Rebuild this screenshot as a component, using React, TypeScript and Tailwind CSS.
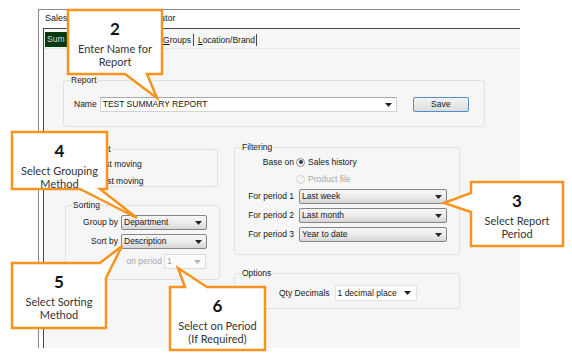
import React from "react";

function Arrow({ color = "#222" }: { color?: string }) {
  return (
    <svg width="7" height="4" viewBox="0 0 7 4" className="shrink-0">
      <path d="M0 0 H7 L3.5 4 Z" fill={color} />
    </svg>
  );
}

function ComboGrad({ text, w }: { text: string; w: string }) {
  return (
    <div
      className={`${w} h-[15px] border border-[#858585] rounded-[2px] bg-gradient-to-b from-[#f7f7f7] via-[#ececec] to-[#d6d6d6] flex items-center justify-between pl-[2px] pr-[4px]`}
    >
      <span className="leading-none">{text}</span>
      <Arrow />
    </div>
  );
}

function GroupBox({
  label,
  className,
  children,
}: {
  label: string;
  className: string;
  children?: React.ReactNode;
}) {
  return (
    <div className={`relative border border-[#e0e0e0] rounded-[3px] ${className}`}>
      <span className="absolute -top-[6px] left-[6px] px-[1px] bg-[#f6f6f6] leading-[10px]">
        {label}
      </span>
      {children}
    </div>
  );
}

function Radio({ checked, disabled }: { checked?: boolean; disabled?: boolean }) {
  return (
    <div
      className={`w-[9px] h-[9px] rounded-full border flex items-center justify-center shrink-0 ${
        disabled
          ? "border-[#d4d4d4] bg-[#f4f4f4]"
          : "border-[#8e8e8e] bg-gradient-to-b from-[#e9e9e9] to-[#ffffff]"
      }`}
    >
      {checked && <div className="w-[4px] h-[4px] rounded-full bg-[#2d3c4a]" />}
    </div>
  );
}

function Callout({
  left,
  top,
  width,
  num,
  lines,
}: {
  left: string;
  top: string;
  width: string;
  num: string;
  lines: string[];
}) {
  return (
    <div
      className={`absolute ${left} ${top} ${width} flex flex-col items-center pt-[9px] font-['Lato',sans-serif] text-[#333]`}
    >
      <div className="text-[17px] leading-[20px] font-bold text-[#111] mb-[3px]">{num}</div>
      {lines.map((l) => (
        <div key={l} className="text-[11px] leading-[13px] whitespace-nowrap">
          {l}
        </div>
      ))}
    </div>
  );
}

export default function App() {
  return (
    <div className="relative w-[572px] h-[356px] bg-white overflow-hidden font-['Liberation_Sans',Arial,sans-serif] text-[8.5px] text-[#161616]">
      {/* window */}
      <div className="ml-[38px] mt-[9px] w-[482px] h-[339px] border-l border-t border-[#8a8a8a] flex flex-col">
        <div className="h-[18px] bg-white flex items-center pl-[6px] text-[9px]">
          Sales Analysis Report Generator
        </div>
        <div className="flex-1 flex">
          <div className="w-[4px] bg-white" />
          <div className="flex-1 border-l border-t border-[#474747] bg-[#f6f6f6] flex flex-col">
            {/* tabs */}
            <div className="h-[20px] border-b border-[#e6e6e6] flex items-end pb-[1px] pl-[1px]">
              <div className="w-[52px] h-[15px] bg-[#093809] text-[#d8d8d8] flex items-center pl-[2px]">
                Sum
              </div>
              <div className="w-[66px] h-[15px] flex items-center justify-end pr-[4px]">
                <span className="h-[12px] border-r border-[#444]" />
              </div>
              <div className="h-[15px] flex items-center">
                <span className="pr-[2px] border-r border-[#444] leading-[12px]">
                  <u>G</u>roups
                </span>
              </div>
              <div className="h-[15px] flex items-center pl-[4px]">
                <span className="pr-[1px] border-r border-[#444] leading-[12px]">
                  <u>L</u>ocation/Brand
                </span>
              </div>
            </div>

            {/* content */}
            <div className="flex flex-col pl-[19px]">
              <GroupBox label="Report" className="mt-[31px] w-[422px] h-[47px]">
                <div className="flex items-center pt-[16px] pl-[10px]">
                  <span>Name</span>
                  <div className="ml-[3px] w-[297px] h-[15px] bg-white border border-[#d2d2d2] border-t-[#a9a9a9] flex items-center justify-between pl-[2px] pr-[4px]">
                    <span>TEST SUMMARY REPORT</span>
                    <Arrow />
                  </div>
                  <div className="ml-[16px] w-[56px] h-[15px] border border-[#4f8fcf] rounded-[2px] bg-gradient-to-b from-[#f4f4f4] to-[#dcdcdc] flex items-center justify-center">
                    Save
                  </div>
                </div>
              </GroupBox>

              <div className="flex items-start gap-[14px] mt-[20px]">
                {/* left column */}
                <div className="flex flex-col w-[157px] pt-[2px]">
                  <GroupBox label="Movement" className="w-[155px] h-[38px]">
                    <div className="flex flex-col gap-[5px] pt-[8px] pl-[8px]">
                      <div className="flex items-center h-[12px] gap-[3px]">
                        <Radio />
                        <span>Fastest moving</span>
                      </div>
                      <div className="flex items-center h-[12px] gap-[3px]">
                        <Radio checked />
                        <span>Slowest moving</span>
                      </div>
                    </div>
                  </GroupBox>
                  <GroupBox label="Sorting" className="ml-[2px] mt-[18px] w-[155px] h-[75px]">
                    <div className="flex flex-col pt-[9px]">
                      <div className="flex items-center">
                        <span className="w-[52px] text-right">Group by</span>
                        <div className="ml-[3px]">
                          <ComboGrad text="Department" w="w-[86px]" />
                        </div>
                      </div>
                      <div className="flex items-center mt-[4px]">
                        <span className="w-[52px] text-right">Sort by</span>
                        <div className="ml-[3px]">
                          <ComboGrad text="Description" w="w-[86px]" />
                        </div>
                      </div>
                      <div className="flex items-center mt-[5px]">
                        <span className="w-[96px] text-right text-[#a8a8a8]">on period</span>
                        <div className="ml-[2px] w-[42px] h-[15px] bg-[#fbfbfb] border border-[#dcdcdc] flex items-center justify-between pl-[2px] pr-[4px] text-[#a0a0a0]">
                          <span>1</span>
                          <Arrow color="#b5b5b5" />
                        </div>
                      </div>
                    </div>
                  </GroupBox>
                </div>

                {/* right column */}
                <div className="flex flex-col w-[226px]">
                  <GroupBox label="Filtering" className="w-[226px] h-[108px]">
                    <div className="flex flex-col pt-[8px]">
                      <div className="flex items-center h-[12px]">
                        <span className="w-[59px] text-right">Base on</span>
                        <div className="ml-[2px]">
                          <Radio checked />
                        </div>
                        <span className="ml-[3px]">Sales history</span>
                      </div>
                      <div className="flex items-center h-[12px] mt-[5px]">
                        <span className="w-[59px]" />
                        <div className="ml-[2px]">
                          <Radio disabled />
                        </div>
                        <span className="ml-[3px] text-[#a8a8a8]">Product file</span>
                      </div>
                      <div className="flex flex-col gap-[4px] mt-[4px]">
                        {[
                          ["For period 1", "Last week"],
                          ["For period 2", "Last month"],
                          ["For period 3", "Year to date"],
                        ].map(([l, v]) => (
                          <div key={l} className="flex items-center">
                            <span className="w-[59px] text-right">{l}</span>
                            <div className="ml-[5px]">
                              <ComboGrad text={v} w="w-[148px]" />
                            </div>
                          </div>
                        ))}
                      </div>
                    </div>
                  </GroupBox>
                  <GroupBox label="Options" className="mt-[18px] w-[226px] h-[36px]">
                    <div className="flex items-center pt-[11px] pl-[44px]">
                      <span>Qty Decimals</span>
                      <div className="ml-[5px] w-[82px] h-[16px] bg-white border border-[#e2e2e2] flex items-center justify-between pl-[2px] pr-[5px]">
                        <span>1 decimal place</span>
                        <Arrow />
                      </div>
                    </div>
                  </GroupBox>
                </div>
              </div>
            </div>
          </div>
        </div>
      </div>

      {/* callout shapes */}
      <svg
        className="absolute left-0 top-0 pointer-events-none"
        width="572"
        height="356"
        viewBox="0 0 572 356"
      >
        <g fill="#ffffff" stroke="#f7931e" strokeWidth="2.5" strokeLinejoin="miter">
          <path d="M68 10 H162 V74 H147 L157 98 L125 74 H68 Z" />
          <path d="M12 132 H107 V189 H100 L137 218 L80 189 H12 Z" />
          <path d="M471 182 H563 V246 H471 V212 L444 203 L471 193 Z" />
          <path d="M12 263 H100 L122 246 L106 278 V328 H12 Z" />
          <path d="M170 287 H185 L178 268 L207 287 H265 V350 H170 Z" />
        </g>
      </svg>

      <Callout left="left-[68px]" top="top-[10px]" width="w-[94px]" num="2" lines={["Enter Name for", "Report"]} />
      <Callout left="left-[12px]" top="top-[132px]" width="w-[95px]" num="4" lines={["Select Grouping", "Method"]} />
      <Callout left="left-[471px]" top="top-[182px]" width="w-[92px]" num="3" lines={["Select Report", "Period"]} />
      <Callout left="left-[12px]" top="top-[263px]" width="w-[94px]" num="5" lines={["Select Sorting", "Method"]} />
      <Callout left="left-[170px]" top="top-[287px]" width="w-[95px]" num="6" lines={["Select on Period", "(If Required)"]} />
    </div>
  );
}
